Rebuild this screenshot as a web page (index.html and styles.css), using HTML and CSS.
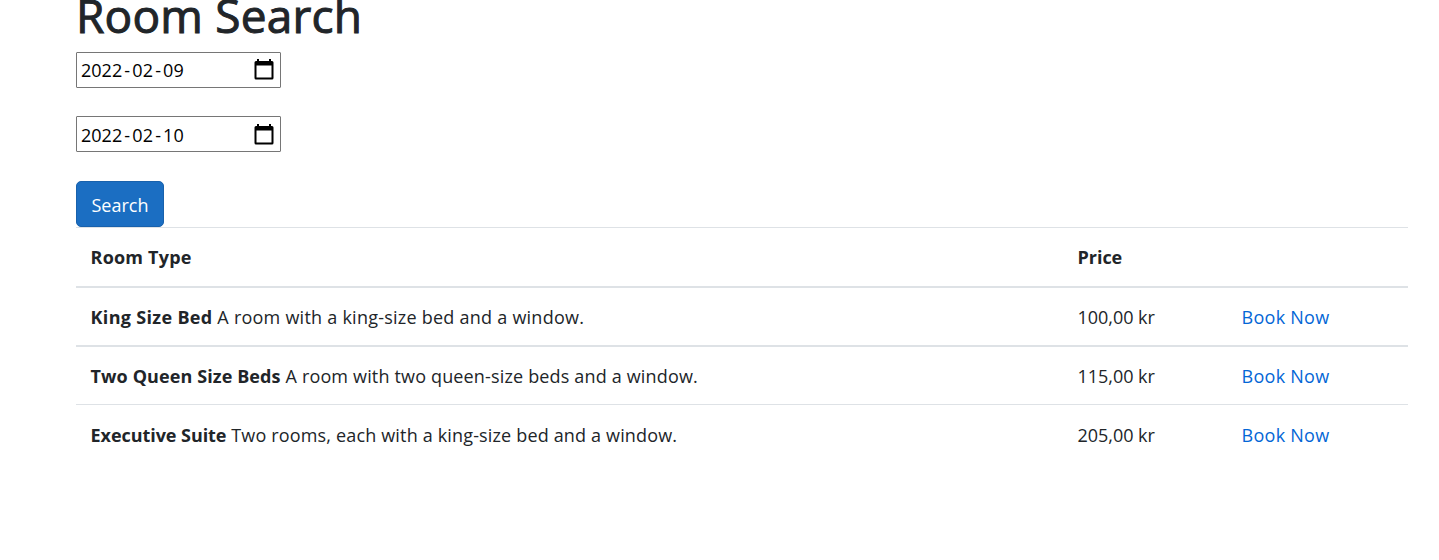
FILE: index.html
```html
<!DOCTYPE html>
<html lang="en">
<head>
<meta charset="utf-8">
<title>Room Search</title>
<link rel="stylesheet" href="styles.css">
</head>
<body>
<main class="container">
  <h1 class="title">Room Search</h1>
  <form class="search">
    <div class="date-field"><span class="date">2022<i>-</i>02<i>-</i>09</span>
      <svg class="calendar" viewBox="0 0 20 21"><path fill-rule="evenodd" d="M3 0h2v2h10V0h2v2h1a1.500 1.500 0 0 1 1.500 1.500V19a1.500 1.500 0 0 1-1.500 1.500H2A1.500 1.500 0 0 1 .5 19V3.500A1.500 1.500 0 0 1 2 2h1zM2.500 6.500v12h15v-12z"/></svg>
    </div>
    <div class="date-field date-field-end"><span class="date">2022<i>-</i>02<i>-</i>10</span>
      <svg class="calendar" viewBox="0 0 20 21"><path fill-rule="evenodd" d="M3 0h2v2h10V0h2v2h1a1.500 1.500 0 0 1 1.500 1.500V19a1.500 1.500 0 0 1-1.500 1.500H2A1.500 1.500 0 0 1 .5 19V3.500A1.500 1.500 0 0 1 2 2h1zM2.500 6.500v12h15v-12z"/></svg>
    </div>
    <button class="button" type="button">Search</button>
  </form>
  <div class="table">
    <div class="row row-head"><b>Room Type</b><b class="price">Price</b></div>
    <div class="row row-thick"><span class="room"><b class="king">King Size Bed</b> <span class="king-text">A room with a king-size bed and a window.</span></span><span class="price">100,00 kr</span><a class="link">Book Now</a></div>
    <div class="row row-thick"><span class="room"><b class="queen">Two Queen Size Beds</b> <span>A room with two queen-size beds and a window.</span></span><span class="price">115,00 kr</span><a class="link">Book Now</a></div>
    <div class="row row-last"><span class="room"><b class="suite">Executive Suite</b> <span>Two rooms, each with a king-size bed and a window.</span></span><span class="price">205,00 kr</span><a class="link">Book Now</a></div>
  </div>
</main>
</body>
</html>
```
FILE: styles.css
```css
* { box-sizing: border-box; }
body {
  margin: 0;
  background: #fff;
  color: #212529;
  font: 18px/28px "Open Sans", "Noto Sans", sans-serif;
}
.container { width: 1332px; margin-left: 76px; }
.title {
  height: 52px;
  margin: 0;
  font-size: 46px;
  line-height: 31px;
  font-weight: 400;
  letter-spacing: 0.2px;
  -webkit-text-stroke: 1px #212529;
  white-space: nowrap;
}
.search { display: flex; flex-direction: column; align-items: flex-start; }
.date-field {
  display: flex;
  align-items: center;
  justify-content: space-between;
  width: 205px;
  height: 36px;
  margin-bottom: 28px;
  padding: 0 6px 0 4px;
  border: 1px solid #767676;
  border-radius: 1px;
  color: #000;
}
.date-field-end { padding-top: 2px; }
.date i { padding: 0 2.200px; font-style: normal; }
.calendar { width: 20px; height: 21px; margin-bottom: 2px; }
.button {
  width: 88px;
  height: 46px;
  margin-top: 1px;
  padding: 2px 0 0;
  border: 1px solid #1861ac;
  border-radius: 5px;
  background: #1b6ec2;
  color: #fff;
  font: inherit;
}
.row {
  display: grid;
  grid-template-columns: 987px 164px 1fr;
  height: 59px;
  padding: 15px 0 0 14.600px;
  border-top: 1px solid #dee2e6;
  white-space: nowrap;
}
.row-head { letter-spacing: 0.2px; }
.row-thick { border-top-width: 2px; }
.row-last { padding-top: 16px; }
.room { letter-spacing: 0.160px; }
.king { letter-spacing: 0.320px; }
.king-text { letter-spacing: 0.240px; }
.queen { letter-spacing: 0.100px; }
.suite { letter-spacing: -0.060px; }
.price { letter-spacing: -0.050px; }
.link { color: #0366d6; letter-spacing: 0.250px; }
```
